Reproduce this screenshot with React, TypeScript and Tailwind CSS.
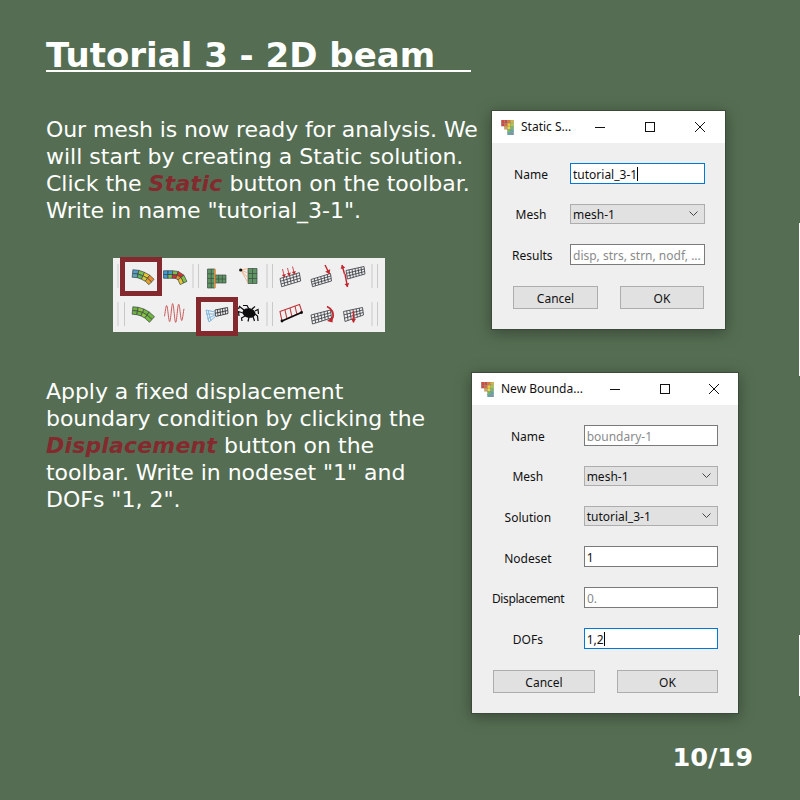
import React from "react";

type P = [number, number];

function lerp(a: P, b: P, t: number): P {
  return [a[0] + (b[0] - a[0]) * t, a[1] + (b[1] - a[1]) * t];
}

function Mesh({ c, cols, rows, stroke = "#33373e", sw = 0.8 }: { c: [P, P, P, P]; cols: number; rows: number; stroke?: string; sw?: number }) {
  const lines: React.ReactNode[] = [];
  for (let i = 0; i <= cols; i++) {
    const a = lerp(c[0], c[1], i / cols);
    const b = lerp(c[3], c[2], i / cols);
    lines.push(<line key={"c" + i} x1={a[0]} y1={a[1]} x2={b[0]} y2={b[1]} stroke={stroke} strokeWidth={sw} />);
  }
  for (let j = 0; j <= rows; j++) {
    const a = lerp(c[0], c[3], j / rows);
    const b = lerp(c[1], c[2], j / rows);
    lines.push(<line key={"r" + j} x1={a[0]} y1={a[1]} x2={b[0]} y2={b[1]} stroke={stroke} strokeWidth={sw} />);
  }
  return <g>{lines}</g>;
}

function Band({ pts, w, colors }: { pts: P[]; w: number; colors: string[][] }) {
  const off = (i: number, s: number): P => {
    const a = pts[Math.max(0, i - 1)];
    const b = pts[Math.min(pts.length - 1, i + 1)];
    const dx = b[0] - a[0];
    const dy = b[1] - a[1];
    const l = Math.hypot(dx, dy);
    return [pts[i][0] - (dy / l) * s, pts[i][1] + (dx / l) * s];
  };
  const cells: React.ReactNode[] = [];
  for (let i = 0; i < pts.length - 1; i++) {
    for (let r = 0; r < 2; r++) {
      const s0 = r === 0 ? -w / 2 : 0;
      const s1 = r === 0 ? 0 : w / 2;
      const q = [off(i, s0), off(i + 1, s0), off(i + 1, s1), off(i, s1)];
      cells.push(
        <polygon key={i + "-" + r} points={q.map((p) => p.join(",")).join(" ")} fill={colors[i][r]} stroke="#3c4248" strokeWidth={0.7} />
      );
    }
  }
  return <g>{cells}</g>;
}

function Arrow({ from, to, sw = 1.4, color = "#c0282d", head = 3 }: { from: P; to: P; sw?: number; color?: string; head?: number }) {
  const dx = to[0] - from[0];
  const dy = to[1] - from[1];
  const l = Math.hypot(dx, dy);
  const ux = dx / l;
  const uy = dy / l;
  const a: P = [to[0] - ux * head - uy * head * 0.7, to[1] - uy * head + ux * head * 0.7];
  const b: P = [to[0] - ux * head + uy * head * 0.7, to[1] - uy * head - ux * head * 0.7];
  return (
    <g>
      <line x1={from[0]} y1={from[1]} x2={to[0]} y2={to[1]} stroke={color} strokeWidth={sw} />
      <polygon points={`${to[0]},${to[1]} ${a.join(",")} ${b.join(",")}`} fill={color} />
    </g>
  );
}

function wavePath() {
  const d: string[] = [];
  for (let i = 0; i <= 80; i++) {
    const t = i / 80;
    const x = 164.5 + t * 19.5;
    const env = 5 + 4.5 * Math.sin(Math.PI * Math.min(1, t * 0.8 + 0.1));
    const y = 313 + env * Math.sin(t * Math.PI * 6.4 + 2.6);
    d.push((i === 0 ? "M" : "L") + x.toFixed(2) + " " + y.toFixed(2));
  }
  return d.join(" ");
}

function Toolbar() {
  const seps = [118, 193, 198.5, 267, 272.5, 372, 377.5];
  const seps2 = [118, 124.5, 267, 272.5, 372, 377.5];
  const spiderLegs: string[] = [
    "M244 310 L239.5 306.5 L238.5 309",
    "M243 313 L238.5 311.5 L239 316",
    "M245 316 L241.5 318 L242 321",
    "M249 317 L248 321.5",
    "M253 316.5 L254.5 321",
    "M255 314 L257.5 316 L258 321",
    "M255 311 L258 309.5 L258.5 314",
    "M249 309 L247 305.5 L243 305.5",
    "M252 309 L255 306.5",
  ];
  return (
    <svg width={290} height={90} viewBox="105 250 290 90" className="block">
      <defs>
        <filter id="soft" x="-5%" y="-5%" width="110%" height="110%">
          <feGaussianBlur stdDeviation="0.25" />
        </filter>
      </defs>
      <rect x={113} y={258} width={272} height={74} fill="#f0f0f0" />
      <g filter="url(#soft)">
        {seps.map((x) => (
          <line key={"a" + x} x1={x} y1={264} x2={x} y2={288} stroke="#c9c9c9" strokeWidth={1} />
        ))}
        {seps2.map((x) => (
          <line key={"b" + x} x1={x} y1={302} x2={x} y2={326} stroke="#c9c9c9" strokeWidth={1} />
        ))}

        <Band
          pts={[[132.5, 273.5], [138, 274], [143, 275.8], [147.5, 278.2], [151.5, 282]]}
          w={7.5}
          colors={[["#4f9fc8", "#5aa8b8"], ["#7cc24a", "#5fb35a"], ["#e9c82f", "#cfc93a"], ["#ec8a2a", "#e5a02a"], ["#d8322a", "#cc3a2a"]]}
        />
        <Band
          pts={[[163.5, 274.5], [168, 274.5], [172.5, 274.5], [177, 275], [181, 277.5], [183.5, 283]]}
          w={7.5}
          colors={[["#3f9bd0", "#3f9bd0"], ["#3f9bd0", "#7cc24a"], ["#7cc24a", "#d8322a"], ["#d8322a", "#ec8a2a"], ["#7cc24a", "#e9c82f"], ["#4fa3d8", "#4fa3d8"]]}
        />

        <rect x={207.5} y={269} width={7.5} height={19} fill="#5f9464" />
        <rect x={215} y={275} width={11} height={8} fill="#5f9464" />
        <Mesh c={[[207.5, 269], [215, 269], [215, 288], [207.5, 288]]} cols={2} rows={4} stroke="#3d4a44" sw={0.7} />
        <Mesh c={[[215, 275], [226, 275], [226, 283], [215, 283]]} cols={3} rows={2} stroke="#3d4a44" sw={0.7} />
        <line x1={214.8} y1={269} x2={214.8} y2={288} stroke="#e8913f" strokeWidth={1.4} />

        <rect x={248} y={268.5} width={9} height={15} fill="#5f9464" />
        <Mesh c={[[248, 268.5], [257, 268.5], [257, 283.5], [248, 283.5]]} cols={2} rows={3} stroke="#3d4a44" sw={0.7} />
        <path d="M241 270 L248 268.5 M241 270 L248 273 M241 270 L248 278 M241 270 L248 283" stroke="#eda777" strokeWidth={0.8} fill="none" />
        <circle cx={240.7} cy={270} r={1.6} fill="#111" />

        <Mesh c={[[280, 278.5], [299.3, 272.7], [300.7, 281], [281.7, 286.7]]} cols={6} rows={3} />
        <Arrow from={[282.5, 269]} to={[284.5, 277.5]} sw={0.8} />
        <Arrow from={[287.5, 268]} to={[289.5, 276]} sw={0.8} />
        <Arrow from={[292.5, 266.5]} to={[294.5, 274.5]} sw={0.8} />

        <Mesh c={[[311, 279.5], [330.5, 273.5], [331.5, 281], [312.5, 286.7]]} cols={6} rows={3} />
        <Arrow from={[325, 265]} to={[329.5, 274]} sw={1.4} head={4} />

        <Mesh c={[[346, 270.5], [364, 266.5], [365, 274], [347.5, 279]]} cols={6} rows={3} />
        <Arrow from={[344.5, 274]} to={[342, 265]} sw={1.4} head={3.5} />
        <Arrow from={[345, 274]} to={[347.5, 287]} sw={1.4} head={3.5} />

        <Band
          pts={[[132.5, 310.5], [137.5, 311], [142.5, 312.5], [147, 315], [152, 319.5]]}
          w={7.5}
          colors={[["#6fb53e", "#6fb53e"], ["#8cc63f", "#6fb53e"], ["#6fb53e", "#8cc63f"], ["#6fb53e", "#6fb53e"], ["#5aa83e", "#5aa83e"]]}
        />
        <path d={wavePath()} stroke="#c95a5a" strokeWidth={1} fill="none" />

        <Mesh c={[[215, 310], [227.5, 307.5], [228, 313.5], [215.5, 316.5]]} cols={5} rows={2} stroke="#1e2126" />
        <path d="M206 310 L215 312 M206 314 L215 314 M207 319 L215 315 M209 322 L216 316 M206 310 L209 322 M208 310 L211 321" stroke="#7fb6de" strokeWidth={1} fill="none" />

        <ellipse cx={249} cy={313} rx={6.5} ry={4.8} fill="#0a0a10" transform="rotate(10 249 313)" />
        {spiderLegs.map((d) => (
          <path key={d} d={d} stroke="#0a0a10" strokeWidth={1.2} fill="none" />
        ))}

        <path d="M280 311.5 L299.5 304.5 L302 312 L282 321 Z" fill="none" stroke="#c0383c" strokeWidth={1.1} />
        <path d="M285 310 L287 319 M290 308 L292 317 M295 306 L297 315" stroke="#c0383c" strokeWidth={1.1} />
        <line x1={282} y1={321} x2={301.5} y2={312.5} stroke="#111" strokeWidth={1.5} />
        <circle cx={282} cy={321} r={1.4} fill="#111" />
        <circle cx={301.5} cy={312.5} r={1.4} fill="#111" />

        <Mesh c={[[311, 315], [330.5, 310], [331.5, 318], [312.5, 324]]} cols={6} rows={3} />
        <path d="M327 306.5 Q334 310 333 317 Q332.5 319 330 320" stroke="#c0282d" strokeWidth={1.8} fill="none" />
        <polygon points="327,321 333,316.5 332.5,322.5" fill="#c0282d" />

        <Mesh c={[[343.5, 311.5], [362.5, 307.5], [363.5, 315], [345, 321.5]]} cols={6} rows={3} />
        <Arrow from={[353.5, 311]} to={[353.5, 322.5]} sw={1.6} head={3.5} />
      </g>
      <rect x={122.5} y={259.5} width={37} height={34} fill="none" stroke="#842a2e" strokeWidth={5} />
      <rect x={198.5} y={299.5} width={37} height={34} fill="none" stroke="#842a2e" strokeWidth={5} />
    </svg>
  );
}

function AppIcon() {
  const cells: [number, number, string][] = [
    [0, 0, "#d8483a"], [3, 0, "#d8483a"], [6, 0, "#e07a38"], [9, 0, "#d8b838"],
    [0, 3, "#c84a4a"], [3, 3, "#d86a3a"], [6, 3, "#e8c83a"], [9, 3, "#a8c848"],
    [3, 6, "#e0a03a"], [6, 6, "#e8d83a"], [9, 6, "#78b858"],
    [6, 9, "#78b858"], [9, 9, "#58a8a8"],
    [6, 12, "#58a8a8"], [9, 12, "#7a94a8"],
  ];
  return (
    <svg width={13} height={15} viewBox="0 0 12 14.5" className="shrink-0">
      {cells.map(([x, y, f]) => (
        <rect key={x + "-" + y} x={x} y={y} width={3} height={2.9} fill={f} stroke="#777" strokeWidth={0.25} />
      ))}
    </svg>
  );
}

function Titlebar({ title, closeW = "w-[50px]" }: { title: string; closeW?: string }) {
  return (
    <div className="flex h-[32px] items-center bg-white pl-[9px] text-[12px] text-[#111]">
      <AppIcon />
      <span className="ml-[7px] flex-1 whitespace-nowrap">{title}</span>
      <span className="flex w-[50px] justify-center">
        <svg width={10} height={10} viewBox="0 0 10 10"><line x1={0} y1={5.5} x2={10} y2={5.5} stroke="#111" /></svg>
      </span>
      <span className="flex w-[50px] justify-center">
        <svg width={10} height={10} viewBox="0 0 10 10"><rect x={0.5} y={0.5} width={9} height={9} fill="none" stroke="#111" /></svg>
      </span>
      <span className={`flex ${closeW} justify-center`}>
        <svg width={10} height={10} viewBox="0 0 10 10"><path d="M0 0 L10 10 M10 0 L0 10" stroke="#111" strokeWidth={1} /></svg>
      </span>
    </div>
  );
}

function Field({ label, labelW, value, kind, h = "h-[21px]", labelClass = "pt-[2px]" }: { label: string; labelW: string; value: string; kind: "text" | "focus" | "hint" | "combo"; h?: string; labelClass?: string }) {
  const box =
    kind === "focus"
      ? "border-[#0078d7] bg-white text-[#111]"
      : kind === "combo"
      ? "border-[#adadad] bg-[#e1e1e1] text-[#111]"
      : kind === "hint"
      ? "border-[#7a7a7a] bg-white text-[#8a8a8a]"
      : "border-[#7a7a7a] bg-white text-[#111]";
  return (
    <div className="flex items-center gap-[20px]">
      <span className={`${labelW} whitespace-nowrap text-center text-[12px] leading-[16px] text-[#111] ${labelClass}`}>{label}</span>
      <div className={`flex ${h} w-[135px] items-center overflow-hidden whitespace-nowrap border pl-[2px] pr-[6px] text-[12px] ${box}`}>
        <span className="pt-[2px]">{value}</span>
        {kind === "focus" && <span className="h-[14px] w-px bg-black" />}
        {kind === "combo" && (
          <svg width={9} height={6} viewBox="0 0 9 6" className="ml-auto">
            <path d="M0.5 0.5 L4.5 4.5 L8.5 0.5" fill="none" stroke="#444" />
          </svg>
        )}
      </div>
    </div>
  );
}

function DlgButton({ text, w }: { text: string; w: string }) {
  return (
    <div className={`flex h-[23px] ${w} items-center justify-center border border-[#adadad] bg-[#e1e1e1] pt-[2px] text-[12px] text-[#111]`}>
      {text}
    </div>
  );
}

export default function App() {
  return (
    <div
      className="relative flex h-[800px] w-[800px] overflow-hidden bg-[#556e53] pl-[46px] text-white"
      style={{ fontFamily: '"DejaVu Sans", sans-serif' }}
    >
      <div className="w-[425px]">
        <h1 className="mt-[36px] h-[36px] w-[425px] border-b-2 border-white text-[34px] font-bold leading-[38px] whitespace-nowrap">
          Tutorial 3 - 2D beam
        </h1>
        <p className="mt-[44px] whitespace-nowrap text-[22px] leading-[27px]">
          <span className="tracking-[-0.1px]">Our mesh is now ready for analysis. We</span>
          <br />
          will start by creating a Static solution.
          <br />
          Click the <b className="font-bold italic tracking-[0.3px] text-[#842a2e]">Static</b> button on the toolbar.
          <br />
          Write in name "tutorial_3-1".
        </p>
        <div className="ml-[59px] mt-[26px]">
          <Toolbar />
        </div>
        <p className="mt-[38px] whitespace-nowrap text-[22px] leading-[27px]">
          <span className="tracking-[-0.05px]">Apply a fixed displacement</span>
          <br />
          <span className="tracking-[-0.05px]">boundary condition by clicking the</span>
          <br />
          <b className="font-bold italic tracking-[0.17px] text-[#842a2e]">Displacement</b> button on the
          <br />
          <span className="tracking-[-0.03px]">toolbar. Write in nodeset "1" and</span>
          <br />
          DOFs "1, 2".
        </p>
      </div>
      <div className="flex w-[283px] flex-col" style={{ fontFamily: '"Noto Sans", sans-serif' }}>
        <div className="ml-[20px] mt-[110px] w-[235px] border border-[#3c4a3a] bg-[#efefef] shadow-[0_3px_14px_rgba(0,0,0,0.35)]">
          <Titlebar title="Static S..." />
          <div className="flex flex-col gap-[20px] px-[20px] pt-[20px]">
            <Field label="Name" labelW="w-[38px]" value="tutorial_3-1" kind="focus" />
            <Field label="Mesh" labelW="w-[38px]" value="mesh-1" kind="combo" h="h-[20px]" />
            <Field label="Results" labelW="w-[38px]" value="disp, strs, strn, nodf, ..." kind="hint" />
          </div>
          <div className="flex justify-between pb-[20px] pl-[21px] pr-[21px] pt-[21px]">
            <DlgButton text="Cancel" w="w-[85px]" />
            <DlgButton text="OK" w="w-[84px]" />
          </div>
        </div>
        <div className="mt-[42px] w-[268px] border border-[#3c4a3a] bg-[#efefef] shadow-[0_3px_14px_rgba(0,0,0,0.35)]">
          <Titlebar title="New Bounda..." closeW="w-[48px]" />
          <div className="flex flex-col gap-[20px] px-[20px] pt-[20px]">
            <Field label="Name" labelW="w-[72px]" value="boundary-1" kind="hint" />
            <Field label="Mesh" labelW="w-[72px]" value="mesh-1" kind="combo" h="h-[20px]" />
            <Field label="Solution" labelW="w-[72px]" labelClass="pt-[4px]" value="tutorial_3-1" kind="combo" h="h-[20px]" />
            <Field label="Nodeset" labelW="w-[72px]" labelClass="pt-[4px]" value="1" kind="text" />
            <Field label="Displacement" labelW="w-[72px]" labelClass="pt-[2px] tracking-[-0.4px]" value="0." kind="hint" />
            <Field label="DOFs" labelW="w-[72px]" value="1,2" kind="focus" />
          </div>
          <div className="flex justify-between pb-[20px] pl-[21px] pr-[20px] pt-[21px]">
            <DlgButton text="Cancel" w="w-[102px]" />
            <DlgButton text="OK" w="w-[101px]" />
          </div>
        </div>
        <div className="mt-[27px] w-[282px] text-right text-[25.6px] font-bold leading-[32px]" style={{ fontFamily: '"DejaVu Sans", sans-serif' }}>
          10/19
        </div>
      </div>
      <div className="absolute right-0 top-[223px] h-[153px] w-px bg-white" />
      <div className="absolute right-0 top-[635px] h-[61px] w-px bg-white" />
    </div>
  );
}
